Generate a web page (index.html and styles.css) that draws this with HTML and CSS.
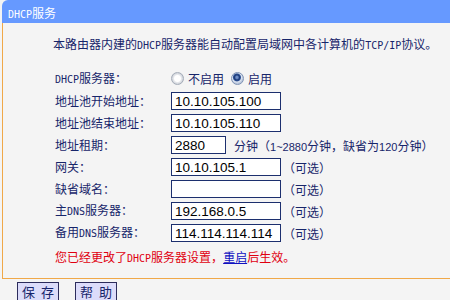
FILE: index.html
```html
<!DOCTYPE html>
<html lang="zh-CN">
<head>
<meta charset="utf-8">
<title>DHCP服务</title>
<link rel="stylesheet" href="styles.css">
</head>
<body>
<div class="panel">
  <div class="title"><span class="en">DHCP</span>服务</div>
  <div class="content">
    <p class="intro">本路由器内建的<span class="en">DHCP</span>服务器能自动配置局域网中各计算机的<span class="en">TCP/IP</span>协议。</p>
    <div class="form">
      <div class="label"><span class="en">DHCP</span>服务器：</div>
      <div class="field">
        <label class="radio"><input type="radio" name="dhcp"><span>不启用</span></label>
        <label class="radio"><input type="radio" name="dhcp" checked><span>启用</span></label>
      </div>

      <div class="label">地址池开始地址：</div>
      <div class="field"><input class="text" type="text" value="10.10.105.100"></div>

      <div class="label">地址池结束地址：</div>
      <div class="field"><input class="text" type="text" value="10.10.105.110"></div>

      <div class="label">地址租期：</div>
      <div class="field"><input class="text short" type="text" value="2880"><span class="unit">分钟</span><span class="hint">（<span class="num">1~2880</span>分钟，缺省为<span class="num">120</span>分钟）</span></div>

      <div class="label">网关：</div>
      <div class="field"><input class="text" type="text" value="10.10.105.1"><span class="opt">（可选）</span></div>

      <div class="label">缺省域名：</div>
      <div class="field"><input class="text" type="text" value=""><span class="opt">（可选）</span></div>

      <div class="label">主<span class="en">DNS</span>服务器：</div>
      <div class="field"><input class="text" type="text" value="192.168.0.5"><span class="opt">（可选）</span></div>

      <div class="label">备用<span class="en">DNS</span>服务器：</div>
      <div class="field"><input class="text" type="text" value="114.114.114.114"><span class="opt">（可选）</span></div>
    </div>
    <p class="msg">您已经更改了<span class="en">DHCP</span>服务器设置，<a href="#">重启</a>后生效。</p>
  </div>
  <div class="actions">
    <button class="btn" type="button">保 存</button>
    <button class="btn" type="button">帮 助</button>
  </div>
</div>
</body>
</html>
```

FILE: styles.css
```css
html, body {
  margin: 0;
  padding: 0;
  background: #f4f4f4;
}
body {
  width: 450px;
  height: 300px;
  overflow: hidden;
  font-family: "Noto Sans CJK SC", "Liberation Sans", sans-serif;
  font-size: 12px;
  color: #17256a;
}
.en {
  font-family: "DejaVu Sans Mono", "Liberation Mono", monospace;
  font-size: 10px;
}
.panel {
  margin-left: 2px;
}
.title {
  height: 23px;
  line-height: 25px;
  background: #6699ff;
  color: #ffffff;
  padding-left: 6px;
  border-top-left-radius: 6px;
}
.content {
  border-left: 1px solid #f0a848;
  border-bottom: 1px solid #f0a848;
  height: 255px;
  box-sizing: content-box;
}
.intro {
  margin: 0;
  padding: 13px 0 0 50px;
  line-height: 16px;
  white-space: nowrap;
}
.form {
  display: grid;
  grid-template-columns: 115px 1fr;
  grid-template-rows: 23px;
  grid-auto-rows: 22px;
  align-items: center;
  margin: 13px 0 0 52px;
}
.label {
  line-height: 16px;
  white-space: nowrap;
}
.field {
  display: flex;
  align-items: center;
  white-space: nowrap;
}
.radio {
  display: inline-flex;
  align-items: center;
  margin-right: 6px;
}
.radio input {
  -webkit-appearance: none;
  appearance: none;
  width: 13px;
  height: 13px;
  margin: 0 4px 0 1px;
  border-radius: 50%;
  border: 1px solid #a4acb8;
  background: radial-gradient(circle at 50% 50%, #ffffff 0 3px, #e6e8ec 4px, #c8ccd4 6px);
  box-sizing: border-box;
}
.radio input:checked {
  border-color: #7f93b4;
  background: radial-gradient(circle at 45% 40%, #6f8fc8 0 1px, #1d3a78 2.5px, #2b4f92 3.5px, #dfe6f2 4.5px, #b9c6dc 6px);
}
.text {
  width: 110px;
  height: 18px;
  box-sizing: border-box;
  margin: 0 0 0 1px;
  padding: 0 0 0 3px;
  border: 1px solid #1c2f6e;
  background: #ffffff;
  font-family: "Liberation Sans", Arial, sans-serif;
  font-size: 13.5px;
  color: #000000;
  outline: none;
}
.text.short {
  width: 55px;
}
.unit {
  margin-left: 8px;
}
.num {
  font-family: "Liberation Sans", Arial, sans-serif;
  font-size: 11px;
}
.opt {
  margin-left: 2px;
}
.msg {
  margin: 5px 0 0 52px;
  line-height: 16px;
  color: #e00010;
  white-space: nowrap;
}
.msg a {
  color: #1010c0;
  text-decoration: underline;
}
.actions {
  display: flex;
  gap: 16px;
  padding: 3px 0 0 15px;
}
.btn {
  width: 42px;
  height: 18px;
  padding: 0;
  border: 1px solid #2c2c5c;
  border-bottom: none;
  background: #dcdcfa;
  color: #17256a;
  font-family: "Noto Sans CJK SC", sans-serif;
  font-size: 13px;
  line-height: 18px;
  word-spacing: 3px;
}
```
